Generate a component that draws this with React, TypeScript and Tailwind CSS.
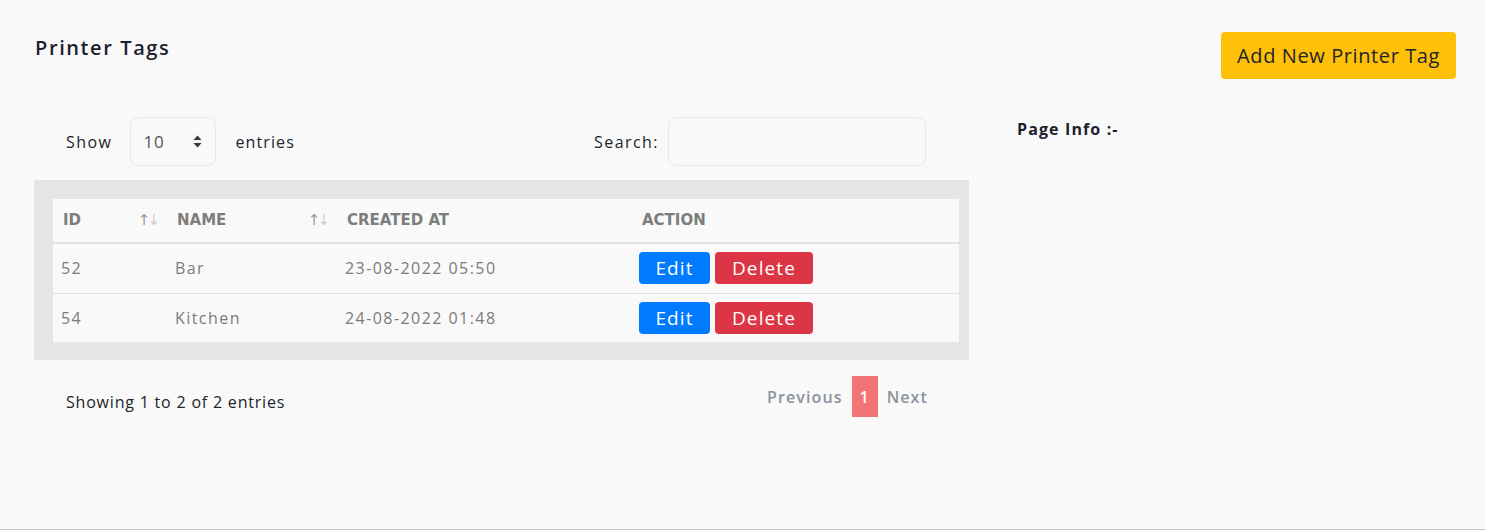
const rows = [
  { id: '52', name: 'Bar', created: '23-08-2022 05:50' },
  { id: '54', name: 'Kitchen', created: '24-08-2022 01:48' },
];

function SortArrows() {
  return (
    <span className="text-[15px] leading-none font-normal tracking-[-3px] font-['DejaVu_Sans',sans-serif]">
      <span className="text-[#9a9a9a]">↑</span>
      <span className="text-[#cfcfcf]">↓</span>
    </span>
  );
}

export default function App() {
  return (
    <div className="min-h-[530px] border-b border-[#c4c4c4] bg-[#f9f9f9] font-['Open_Sans',sans-serif] tracking-[0.05em] text-[#212529]">
      <div className="flex items-start justify-between pl-[35px] pr-[29px] pt-[32px]">
        <h1 className="mt-[1px] text-[20px] font-semibold tracking-[0.08em] text-[#1d1d2c]">Printer Tags</h1>
        <button className="h-[47px] rounded-[4px] bg-[#ffc107] px-[16px] text-[20px] tracking-[0.03em] text-[#212529]">
          Add New Printer Tag
        </button>
      </div>

      <div className="mt-[38px] flex pl-[34px]">
        <div className="w-[935px]">
          <div className="flex items-center justify-between pl-[32px] pr-[43px]">
            <div className="flex items-center text-[16px] text-[#212529]">
              <span className="tracking-[0.09em]">Show</span>
              <div className="ml-[18px] flex h-[49px] w-[86px] items-center justify-between rounded-[8px] border border-[#efe9dc] pl-[12px] pr-[13px] text-[#555]">
                <span className="text-[17px]">10</span>
                <svg width="9" height="13" viewBox="0 0 9 13">
                  <path d="M4.5 0.5 L8.5 5 H0.5 Z" fill="#343a40" />
                  <path d="M4.5 12.5 L8.5 8 H0.5 Z" fill="#343a40" />
                </svg>
              </div>
              <span className="ml-[19px] tracking-[0.07em]">entries</span>
            </div>
            <div className="flex items-center text-[16px]">
              <span className="tracking-[0.09em]">Search:</span>
              <input className="ml-[9px] h-[49px] w-[258px] rounded-[8px] border border-[#efe9dc] bg-transparent outline-none" />
            </div>
          </div>

          <div className="mt-[14px] bg-[#e5e5e5] pb-[18px] pl-[19px] pr-[10px] pt-[19px]">
            <table className="w-full border-collapse bg-[#f9f9f9] text-left">
              <thead>
                <tr className="h-[44px] border-b-2 border-[#dee2e6] font-['DejaVu_Sans',sans-serif] text-[15px] font-bold uppercase tracking-normal text-[#7d7d7d]">
                  <th className="w-[114px] pl-[10px]">
                    <div className="flex items-center justify-between pr-[10px]">
                      <span>ID</span>
                      <SortArrows />
                    </div>
                  </th>
                  <th className="w-[170px] pl-[10px]">
                    <div className="flex items-center justify-between pr-[10px]">
                      <span>Name</span>
                      <SortArrows />
                    </div>
                  </th>
                  <th className="w-[295px] pl-[10px]">Created At</th>
                  <th className="pl-[10px]">Action</th>
                </tr>
              </thead>
              <tbody className="text-[16px] tracking-[0.09em] text-[#7b7b7b]">
                {rows.map((r, i) => (
                  <tr key={r.id} className={i === 0 ? 'h-[50px] border-b border-[#dee2e6]' : 'h-[49px]'}>
                    <td className="pl-[8px]">{r.id}</td>
                    <td className="pl-[8px]">{r.name}</td>
                    <td className="pl-[8px]">{r.created}</td>
                    <td className="pl-[7px]">
                      <div className="flex gap-[5px] tracking-[0.07em]">
                        <button className="h-[32px] w-[71px] rounded-[4px] bg-[#007bff] text-[19px] text-white">Edit</button>
                        <button className="h-[32px] w-[98px] rounded-[4px] bg-[#dc3545] text-[19px] text-white">Delete</button>
                      </div>
                    </td>
                  </tr>
                ))}
              </tbody>
            </table>
          </div>

          <div className="mt-[16px] flex items-center justify-between pl-[32px] pr-[41px]">
            <span className="mt-[10px] text-[16px]">Showing 1 to 2 of 2 entries</span>
            <div className="flex items-center text-[16px] font-semibold tracking-[0.07em] text-[#8a929c]">
              <span>Previous</span>
              <span className="ml-[9px] flex h-[41px] w-[26px] items-center justify-center bg-[#f27474] text-white">1</span>
              <span className="ml-[9px]">Next</span>
            </div>
          </div>
        </div>

        <div className="ml-[48px] text-[16px] font-bold tracking-[0.07em] text-[#1d1d2c]">Page Info :-</div>
      </div>
    </div>
  );
}
